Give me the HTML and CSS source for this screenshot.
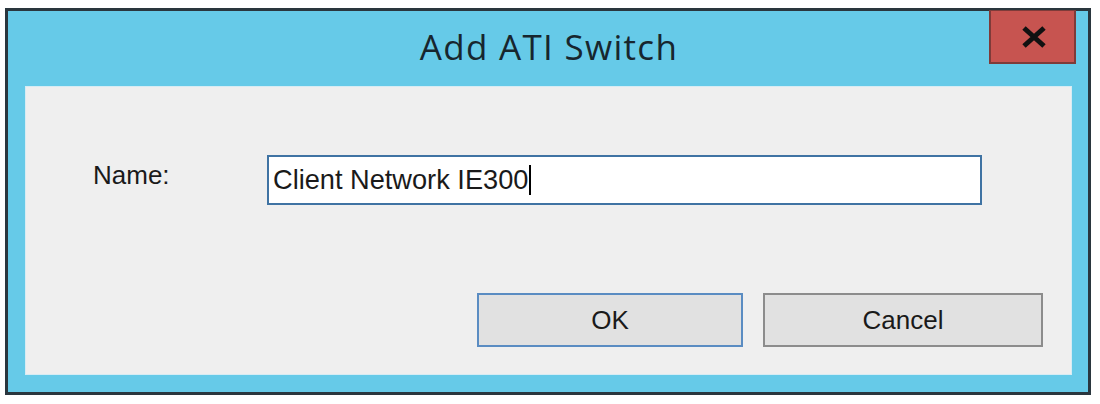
FILE: index.html
```html
<!DOCTYPE html>
<html>
<head>
<meta charset="utf-8">
<link rel="stylesheet" href="styles.css">
</head>
<body>
<div class="window">
  <div class="titlebar">
    <div class="title">Add ATI Switch</div>
    <div class="close">
      <svg width="26" height="22" viewBox="0 0 26 22"><path d="M3 2 L23 20 M23 2 L3 20" stroke="#111" stroke-width="5" stroke-linecap="butt"/></svg>
    </div>
  </div>
  <div class="client">
    <div class="row">
      <div class="label">Name:</div>
      <div class="input"><span class="value">Client Network IE300</span><span class="caret"></span></div>
    </div>
    <div class="buttons">
      <div class="btn btn-default">OK</div>
      <div class="btn">Cancel</div>
    </div>
  </div>
</div>
</body>
</html>
```
FILE: styles.css
```css
html, body {
  margin: 0;
  padding: 0;
  background: #ffffff;
}
body {
  padding: 8px 0 0 5px;
}
.window {
  width: 1086px;
  height: 387px;
  box-sizing: border-box;
  border: 3px solid #2a363e;
  background: #66cae8;
  display: flex;
  flex-direction: column;
  padding: 0 16px 17px 17px;
  position: relative;
}
.titlebar {
  height: 75px;
  display: flex;
  align-items: center;
  justify-content: center;
  flex: none;
}
.title {
  font-family: "Open Sans", "Noto Sans", sans-serif;
  font-size: 35px;
  letter-spacing: 1.3px;
  color: #17262e;
  margin-left: 1px;
  margin-top: -5px;
}
.close {
  position: absolute;
  top: -1px;
  right: 12px;
  width: 87px;
  height: 54px;
  box-sizing: border-box;
  background: #c75450;
  border: 2px solid #7e3b39;
  border-top: 1px solid #7e3b39;
  display: flex;
  align-items: center;
  justify-content: center;
}
.close svg {
  display: block;
  margin-top: 1px;
  margin-left: 2px;
}
.client {
  flex: 1;
  background: #efefef;
  border: 1px solid #d6ecf4;
  display: flex;
  flex-direction: column;
  padding: 68px 28px 27px 67px;
  font-family: "Liberation Sans", Arial, sans-serif;
  color: #1a1a1a;
}
.row {
  display: flex;
  align-items: center;
}
.label {
  font-size: 26px;
  width: 174px;
  margin-top: -10px;
}
.input {
  width: 715px;
  height: 50px;
  box-sizing: border-box;
  border: 2px solid #3f73a3;
  background: #ffffff;
  display: flex;
  align-items: center;
  padding-left: 4px;
  font-size: 27.2px;
}
.caret {
  display: inline-block;
  width: 2px;
  height: 30px;
  background: #000;
  margin-left: 1px;
}
.buttons {
  margin-top: auto;
  display: flex;
  justify-content: flex-end;
  gap: 20px;
}
.btn {
  width: 280px;
  height: 54px;
  box-sizing: border-box;
  background: #e1e1e1;
  border: 2px solid #8c8c8c;
  display: flex;
  align-items: center;
  justify-content: center;
  font-size: 26px;
}
.btn-default {
  width: 266px;
  border-color: #5a8cc2;
}
```
